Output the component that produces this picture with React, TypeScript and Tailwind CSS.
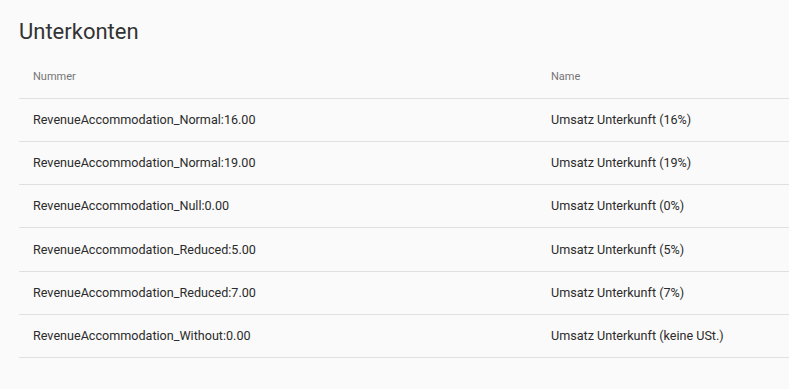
const rows = [
  ['RevenueAccommodation_Normal:16.00', 'Umsatz Unterkunft (16%)'],
  ['RevenueAccommodation_Normal:19.00', 'Umsatz Unterkunft (19%)'],
  ['RevenueAccommodation_Null:0.00', 'Umsatz Unterkunft (0%)'],
  ['RevenueAccommodation_Reduced:5.00', 'Umsatz Unterkunft (5%)'],
  ['RevenueAccommodation_Reduced:7.00', 'Umsatz Unterkunft (7%)'],
  ['RevenueAccommodation_Without:0.00', 'Umsatz Unterkunft (keine USt.)']
];

export default function App() {
  return (
    <div className="h-[389px] w-[789px] overflow-hidden bg-[#fafafa] pl-[19px] font-['Roboto',sans-serif]">
      <h2 className="pt-[18px] text-[22px] leading-[28px] font-normal text-[#333]">
        Unterkonten
      </h2>
      <table className="mt-[8px] w-[770px] border-collapse">
        <thead>
          <tr className="h-[44px] border-b border-[#e0e0e0]">
            <th className="w-[532px] pt-[2px] pl-[14px] text-left text-[11px] font-normal text-[#757575]">
              Nummer
            </th>
            <th className="pt-[2px] text-left text-[11px] font-normal text-[#757575]">Name</th>
          </tr>
        </thead>
        <tbody>
          {rows.map(([nr, name]) => (
            <tr key={nr} className="h-[43.33px] border-b border-[#e0e0e0]">
              <td className="pt-[1px] pl-[14px] text-[12.6px] text-[#2b2b2b]">{nr}</td>
              <td className="pt-[1px] text-[12.6px] text-[#2b2b2b]">{name}</td>
            </tr>
          ))}
        </tbody>
      </table>
    </div>
  );
}
